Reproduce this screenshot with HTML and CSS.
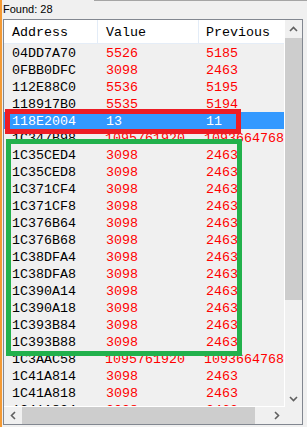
FILE: index.html
```html
<!DOCTYPE html>
<html lang="en">
<head>
    <meta charset="UTF-8">
    <meta name="viewport" content="width=device-width, initial-scale=1.0">
    <title>Found list</title>
    <link rel="stylesheet" href="styles.css">
</head>
<body>
<div class="screen">
    <div class="topline"></div>
    <div class="found">Found: 28</div>

    <div class="list">
        <div class="view">
            <div class="head">
                <span class="col addr">Address</span><span class="col val">Value</span><span class="col prev">Previous</span>
            </div>
            <div class="row"><span class="col addr">04DD7A70</span><span class="col val">5526</span><span class="col prev">5185</span></div>
            <div class="row"><span class="col addr">0FBB0DFC</span><span class="col val">3098</span><span class="col prev">2463</span></div>
            <div class="row"><span class="col addr">112E88C0</span><span class="col val">5536</span><span class="col prev">5195</span></div>
            <div class="row"><span class="col addr">118917B0</span><span class="col val">5535</span><span class="col prev">5194</span></div>
            <div class="row sel"><span class="col addr">118E2004</span><span class="col val">13</span><span class="col prev">11</span></div>
            <div class="row"><span class="col addr">1C347B98</span><span class="col val">1095761920</span><span class="col prev">1093664768</span></div>
            <div class="row"><span class="col addr">1C35CED4</span><span class="col val">3098</span><span class="col prev">2463</span></div>
            <div class="row"><span class="col addr">1C35CED8</span><span class="col val">3098</span><span class="col prev">2463</span></div>
            <div class="row"><span class="col addr">1C371CF4</span><span class="col val">3098</span><span class="col prev">2463</span></div>
            <div class="row"><span class="col addr">1C371CF8</span><span class="col val">3098</span><span class="col prev">2463</span></div>
            <div class="row"><span class="col addr">1C376B64</span><span class="col val">3098</span><span class="col prev">2463</span></div>
            <div class="row"><span class="col addr">1C376B68</span><span class="col val">3098</span><span class="col prev">2463</span></div>
            <div class="row"><span class="col addr">1C38DFA4</span><span class="col val">3098</span><span class="col prev">2463</span></div>
            <div class="row"><span class="col addr">1C38DFA8</span><span class="col val">3098</span><span class="col prev">2463</span></div>
            <div class="row"><span class="col addr">1C390A14</span><span class="col val">3098</span><span class="col prev">2463</span></div>
            <div class="row"><span class="col addr">1C390A18</span><span class="col val">3098</span><span class="col prev">2463</span></div>
            <div class="row"><span class="col addr">1C393B84</span><span class="col val">3098</span><span class="col prev">2463</span></div>
            <div class="row"><span class="col addr">1C393B88</span><span class="col val">3098</span><span class="col prev">2463</span></div>
            <div class="row"><span class="col addr">1C3AAC58</span><span class="col val">1095761920</span><span class="col prev">1093664768</span></div>
            <div class="row"><span class="col addr">1C41A814</span><span class="col val">3098</span><span class="col prev">2463</span></div>
            <div class="row"><span class="col addr">1C41A818</span><span class="col val">3098</span><span class="col prev">2463</span></div>
            <div class="row"><span class="col addr">1C41A824</span><span class="col val">3098</span><span class="col prev">2463</span></div>
        </div>

        <div class="vscroll">
            <div class="sbtn"><svg width="9" height="6" viewBox="0 0 9 6"><path d="M1 5L4.5 1.5L8 5" fill="none" stroke="#606060" stroke-width="1.6"/></svg></div>
            <div class="track"><div class="thumb vthumb"></div></div>
            <div class="sbtn"><svg width="9" height="6" viewBox="0 0 9 6"><path d="M1 1L4.5 4.5L8 1" fill="none" stroke="#606060" stroke-width="1.6"/></svg></div>
        </div>
        <div class="hscroll">
            <div class="sbtn"><svg width="6" height="9" viewBox="0 0 6 9"><path d="M5 1L1.5 4.5L5 8" fill="none" stroke="#606060" stroke-width="1.6"/></svg></div>
            <div class="track"><div class="thumb hthumb"></div></div>
            <div class="sbtn"><svg width="6" height="9" viewBox="0 0 6 9"><path d="M1 1L4.5 4.5L1 8" fill="none" stroke="#606060" stroke-width="1.6"/></svg></div>
        </div>
        <div class="corner"></div>
    </div>

    <!-- paint marks drawn over the list -->
    <div class="mark mark-red"></div>
    <div class="mark mark-green"></div>
</div>
</body>
</html>
```

FILE: styles.css
```css
body {
    margin: 0;
    background: #f0f0f0;
}
.screen {
    position: relative;
    width: 307px;
    height: 427px;
    overflow: hidden;
    padding-left: 2px;
    box-sizing: border-box;
    background: linear-gradient(to right, #f39a35 2px, #f0f0f0 2px);
}
.topline {
    margin-left: 92px;
    border-top: 1px solid #a5a5a5;
}
.found {
    height: 18px;
    padding-left: 1px;
    font-family: "Liberation Sans", Arial, sans-serif;
    font-size: 11px;
    line-height: 16px;
    color: #000;
}
.list {
    margin-left: 1px;
    width: 300px;
    height: 406px;
    box-sizing: border-box;
    border: 1px solid #828790;
    display: grid;
    grid-template-columns: 281px 17px;
    grid-template-rows: 387px 17px;
}
.view {
    overflow: hidden;
    box-sizing: border-box;
    border-right: 1px solid #fff;
    border-bottom: 1px solid #fff;
    font-family: "Liberation Mono", "Courier New", monospace;
    font-size: 10pt;
    white-space: nowrap;
}
.head {
    display: flex;
    height: 24px;
    box-sizing: border-box;
    background: #fff;
    border-bottom: 1px solid #e5edf7;
    line-height: 21px;
    color: #000;
}
.col {
    display: block;
    box-sizing: border-box;
    padding-left: 8px;
}
.head .col {
    padding-top: 2px;
}
.col.addr {
    width: 94px;
}
.col.val {
    width: 101px;
}
.col.prev {
    flex: 1;
    padding-left: 7px;
}
.head .addr,
.head .val {
    border-right: 1px solid #e3ecf7;
}
.row {
    display: flex;
    height: 17px;
    line-height: 17px;
    color: #ff0000;
}
.row .col {
    padding-top: 1px;
}
.row .addr {
    color: #000;
}
.row.sel {
    background: #3399ff;
}
.row.sel .col {
    color: #fff;
}
.vscroll {
    display: flex;
    flex-direction: column;
}
.hscroll {
    display: flex;
}
.sbtn {
    width: 17px;
    height: 17px;
    flex: none;
    display: flex;
    align-items: center;
    justify-content: center;
}
.track {
    flex: 1;
    display: flex;
}
.vscroll .track {
    flex-direction: column;
}
.thumb {
    background: #cdcdcd;
}
.vthumb {
    height: 262px;
    margin-top: 1px;
}
.hthumb {
    width: 233px;
    margin-left: 1px;
}
.corner {
    background: #f0f0f0;
}
.mark {
    position: absolute;
    box-sizing: border-box;
    border: 5px solid;
}
.mark-red {
    left: 5px;
    top: 109px;
    width: 236px;
    height: 25px;
    border-color: #ed1c24;
}
.mark-green {
    left: 6px;
    top: 139px;
    width: 236px;
    height: 217px;
    border-color: #22b14c;
}
```
